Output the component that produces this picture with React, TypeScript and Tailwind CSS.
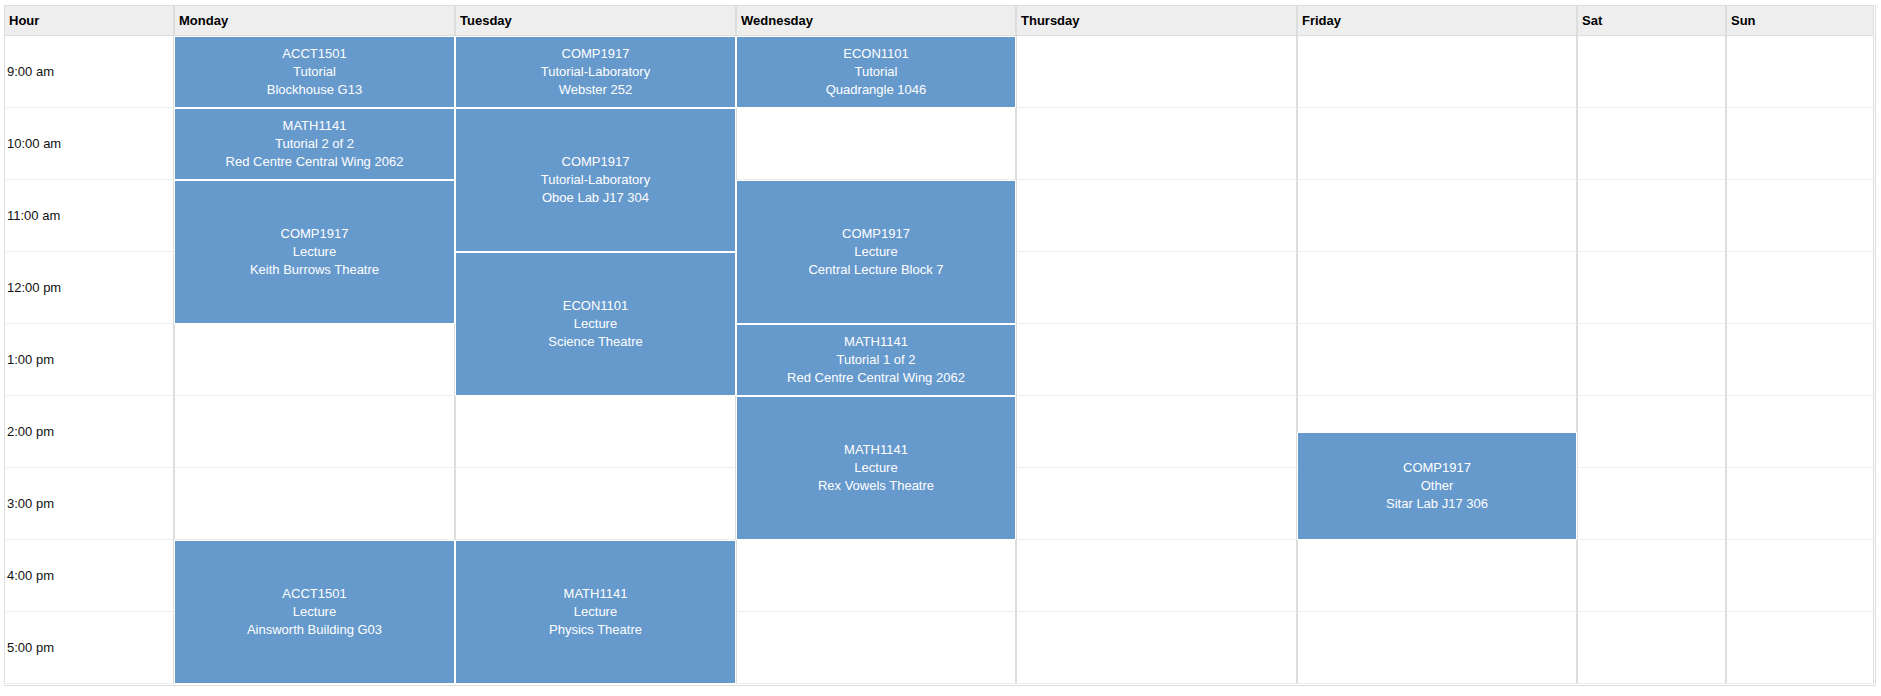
import React from "react";

const days = ["Monday", "Tuesday", "Wednesday", "Thursday", "Friday", "Sat", "Sun"];
const hours = ["9:00 am", "10:00 am", "11:00 am", "12:00 pm", "1:00 pm", "2:00 pm", "3:00 pm", "4:00 pm", "5:00 pm"];

const headerCols = ["col-start-1", "col-start-2", "col-start-3", "col-start-4", "col-start-5", "col-start-6", "col-start-7", "col-start-8"];
const dayCols = ["col-start-2", "col-start-3", "col-start-4", "col-start-5", "col-start-6", "col-start-7", "col-start-8"];
const hourRows = ["row-start-2", "row-start-4", "row-start-6", "row-start-8", "row-start-10", "row-start-12", "row-start-14", "row-start-16", "row-start-18"];

type Ev = { pos: string; code: string; kind: string; place: string };

const events: Ev[] = [
  { pos: "col-start-2 row-start-2 row-span-2", code: "ACCT1501", kind: "Tutorial", place: "Blockhouse G13" },
  { pos: "col-start-2 row-start-4 row-span-2", code: "MATH1141", kind: "Tutorial 2 of 2", place: "Red Centre Central Wing 2062" },
  { pos: "col-start-2 row-start-6 row-span-4", code: "COMP1917", kind: "Lecture", place: "Keith Burrows Theatre" },
  { pos: "col-start-2 row-start-16 row-span-4", code: "ACCT1501", kind: "Lecture", place: "Ainsworth Building G03" },
  { pos: "col-start-3 row-start-2 row-span-2", code: "COMP1917", kind: "Tutorial-Laboratory", place: "Webster 252" },
  { pos: "col-start-3 row-start-4 row-span-4", code: "COMP1917", kind: "Tutorial-Laboratory", place: "Oboe Lab J17 304" },
  { pos: "col-start-3 row-start-8 row-span-4", code: "ECON1101", kind: "Lecture", place: "Science Theatre" },
  { pos: "col-start-3 row-start-16 row-span-4", code: "MATH1141", kind: "Lecture", place: "Physics Theatre" },
  { pos: "col-start-4 row-start-2 row-span-2", code: "ECON1101", kind: "Tutorial", place: "Quadrangle 1046" },
  { pos: "col-start-4 row-start-6 row-span-4", code: "COMP1917", kind: "Lecture", place: "Central Lecture Block 7" },
  { pos: "col-start-4 row-start-10 row-span-2", code: "MATH1141", kind: "Tutorial 1 of 2", place: "Red Centre Central Wing 2062" },
  { pos: "col-start-4 row-start-12 row-span-4", code: "MATH1141", kind: "Lecture", place: "Rex Vowels Theatre" },
  { pos: "col-start-6 row-start-13 row-span-3", code: "COMP1917", kind: "Other", place: "Sitar Lab J17 306" },
];

export default function App() {
  return (
    <div className="min-h-[696px] w-full bg-white font-['Liberation_Sans',Arial,sans-serif]">
      <div className="ml-[4px] pt-[5px]">
        <div className="inline-block border-r border-b border-[#dddddd] pr-px pb-px">
          <div className="grid grid-cols-[170px_281px_281px_280px_281px_280px_149px_148px] grid-rows-[31px_repeat(18,36px)]">
            {["Hour", ...days].map((d, i) => (
              <div
                key={d}
                className={`${headerCols[i]} row-start-1 flex items-center border border-[#dddddd] bg-[#eeeeee] px-[4px] text-[13px] font-bold text-black`}
              >
                {d}
              </div>
            ))}
            {hours.map((h, i) => (
              <div
                key={h}
                className={`col-start-1 ${hourRows[i]} row-span-2 flex items-center border-x border-b border-x-[#dddddd] border-b-[#eeeeee] pl-[2px] text-[13px] text-[#111]`}
              >
                {h}
              </div>
            ))}
            {hours.map((h, i) =>
              dayCols.map((c) => (
                <div
                  key={h + c}
                  className={`${c} ${hourRows[i]} row-span-2 border-x border-b border-x-[#dddddd] border-b-[#eeeeee]`}
                />
              ))
            )}
            {events.map((e, i) => (
              <div
                key={i}
                className={`${e.pos} flex flex-col items-center justify-center border border-white bg-[#6699cc] text-center text-[13px] leading-[18px] text-white`}
              >
                <div>{e.code}</div>
                <div>{e.kind}</div>
                <div>{e.place}</div>
              </div>
            ))}
          </div>
        </div>
      </div>
    </div>
  );
}
